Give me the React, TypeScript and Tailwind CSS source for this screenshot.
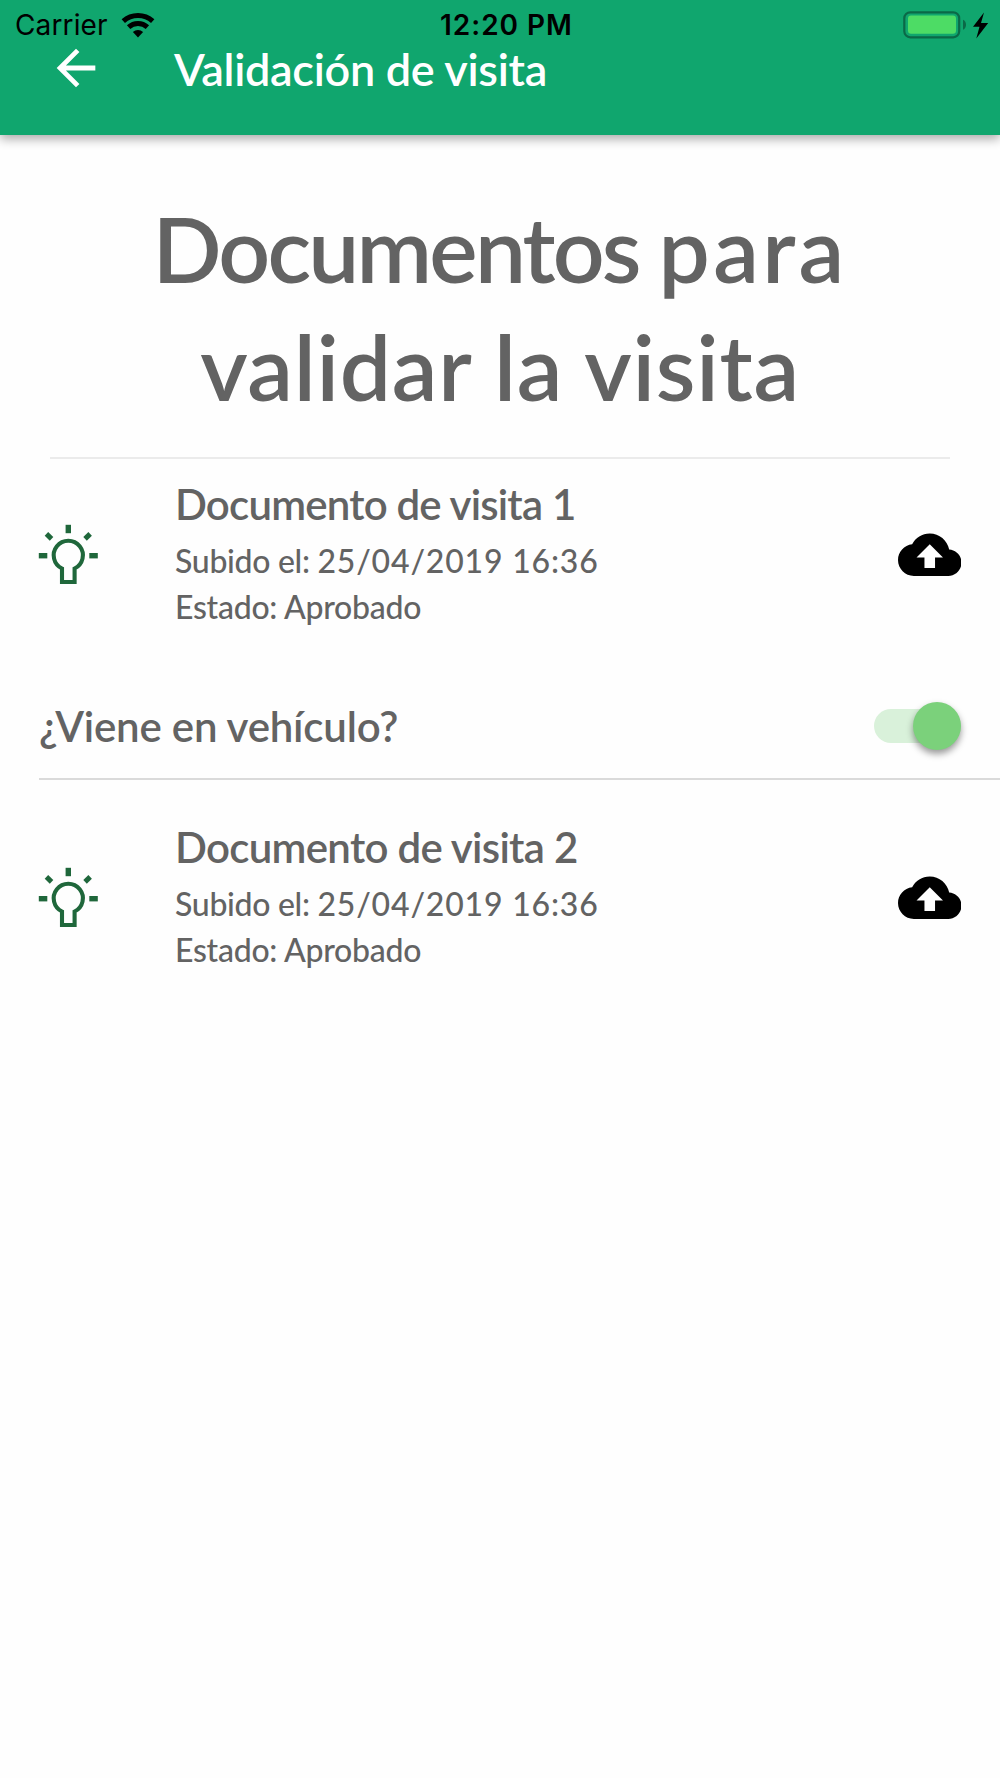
import React from "react";

function WifiIcon() {
  return (
    <svg className="ml-[12px] h-[27px] w-[36px]" viewBox="0 0 36 27" fill="none" stroke="#000" strokeWidth="5">
      <path d="M3.3 9.2A21.9 21.9 0 0 1 32.7 9.2" />
      <path d="M8.6 15.1A14 14 0 0 1 27.4 15.1" />
      <path d="M18 25.5L12.9 19.9A7.6 7.6 0 0 1 23.1 19.9Z" fill="#000" stroke="none" />
    </svg>
  );
}

function BatteryIcon() {
  return (
    <svg className="h-[30px] w-[88px]" viewBox="902 10.5 88 30">
      <rect x="904.3" y="11.8" width="54.9" height="25" rx="6" fill="none" stroke="#0b6947" strokeWidth="2.2" />
      <rect x="908" y="15" width="48" height="18.2" rx="3" fill="#4ddc65" />
      <path d="M963 19.3C967 21 967 27.7 963 29.3Z" fill="#0b6947" />
      <path d="M984 12L973 26.2H979.5L976.3 38L988.2 22.4H981Z" fill="#000" />
    </svg>
  );
}

function BackIcon() {
  return (
    <svg className="ml-[47px] h-[58px] w-[58px]" viewBox="0 0 24 24" fill="#fff">
      <path d="M20 11H7.83l5.59-5.59L12 4l-8 8 8 8 1.41-1.41L7.83 13H20v-2z" />
    </svg>
  );
}

function BulbIcon() {
  return (
    <svg className="ml-[38px] h-[61px] w-[61px] shrink-0" viewBox="38 524 61 61" fill="#1f673b">
      <path
        d="M62 582V568.5A14.6 14.6 0 1 1 74.6 568.5V582Z"
        fill="none"
        stroke="#1f673b"
        strokeWidth="4.1"
      />
      <rect x="65.6" y="524.8" width="5.4" height="8.4" />
      <rect x="38.8" y="553" width="8.5" height="5.4" />
      <rect x="89.3" y="553" width="8.5" height="5.4" />
      <path d="M44.7 535.7L48.2 532.1L53.3 537L49.8 540.7Z" />
      <path d="M91.9 535.7L88.4 532.1L83.3 537L86.8 540.7Z" />
    </svg>
  );
}

function CloudUploadIcon() {
  return (
    <svg className="mr-[39px] ml-auto h-[63.5px] w-[63.5px] shrink-0" viewBox="0 0 24 24" fill="#000">
      <path d="M19.35 10.04C18.67 6.59 15.64 4 12 4 9.11 4 6.6 5.64 5.35 8.04 2.34 8.36 0 10.91 0 14c0 3.31 2.69 6 6 6h13c2.76 0 5-2.24 5-5 0-2.64-2.05-4.78-4.65-4.96zM14 13v4h-4v-4H7l5-5 5 5h-3z" />
    </svg>
  );
}

function DocumentRow({ title }: { title: React.ReactNode }) {
  return (
    <div className="flex h-[191px] items-center">
      <BulbIcon />
      <div className="ml-[76px] whitespace-nowrap">
        <h2 className="mb-[9px] text-[42px] leading-[50px] font-semibold">{title}</h2>
        <p className="text-[32px] leading-[46px] font-medium tracking-[-0.3px]">
          Subido el: <span className="tracking-[0.82px]">25/04/2019 16:36</span>
        </p>
        <p className="text-[32px] leading-[46px] font-medium tracking-[-0.25px]">Estado: Aprobado</p>
      </div>
      <CloudUploadIcon />
    </div>
  );
}

export default function App() {
  return (
    <div className="min-h-[1778px] w-full bg-[#fefefe] font-['Lato',sans-serif] text-[#636363]">
      <header className="relative flex h-[135px] items-center bg-[#10a66e] shadow-[0_4px_10px_rgba(0,0,0,0.33)]">
        <div className="absolute inset-x-0 top-0 grid h-[51px] grid-cols-3 items-center font-['Inter',sans-serif] text-[28px] leading-[51px] text-black">
          <div className="flex items-center pl-[15px] tracking-[0.13px]">
            Carrier
            <WifiIcon />
          </div>
          <div className="pl-[13px] text-center font-semibold tracking-[0.97px]">12:20 PM</div>
          <div className="flex justify-end pr-[10px]">
            <BatteryIcon />
          </div>
        </div>
        <BackIcon />
        <div className="ml-[69px] pt-[2px] text-[45px] leading-[54px] font-semibold tracking-[-0.3px] text-white">
          Validación de visita
        </div>
      </header>

      <h1 className="pt-[54px] text-center text-[91px] leading-[118px] font-semibold">
        <span className="block tracking-[-2.8px]">
          Documentos <span className="tracking-[3.3px]">para</span>
        </span>
        <span className="block tracking-[0.7px]">validar la visita</span>
      </h1>
      <div className="mx-[50px] mt-[32px] h-[2px] bg-[#ebebeb]" />

      <DocumentRow title={<span className="tracking-[-0.8px]">Documento de visita 1</span>} />

      <div className="mt-[24px] ml-[39px] flex h-[106px] items-center border-b-2 border-[#dadada]">
        <span className="text-[42px] leading-[50px] font-semibold tracking-[-0.2px]">¿Viene en vehículo?</span>
        <div className="mr-[39px] ml-auto flex h-[34px] w-[87px] items-center justify-end rounded-full bg-[#d9f1da]">
          <div className="size-[48px] shrink-0 rounded-full bg-[#7bd17b] shadow-[0_4px_7px_rgba(0,0,0,0.4)]" />
        </div>
      </div>

      <div className="mt-[22px]">
        <DocumentRow title={<span className="tracking-[-0.7px]">Documento de visita 2</span>} />
      </div>
    </div>
  );
}
